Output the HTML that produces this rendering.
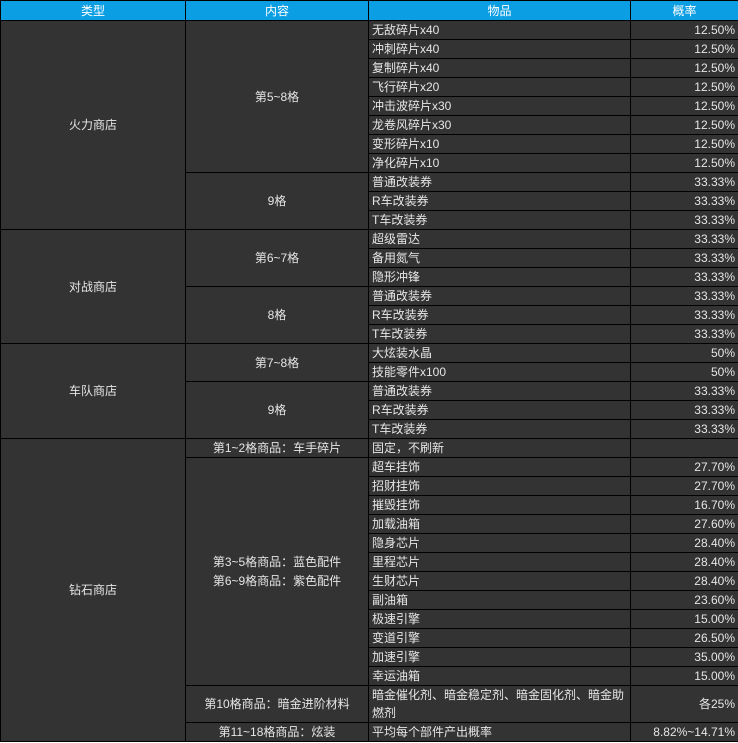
<!DOCTYPE html>
<html><head><meta charset="utf-8"><style>
html,body{margin:0;padding:0;background:#fff;}
table{border-collapse:collapse;table-layout:fixed;width:738px;font-family:"Liberation Sans","Noto Sans CJK SC",sans-serif;font-size:12px;color:#e6e6e6;background:#333;}
td,th{border:1px solid #000;padding:0 3px;height:18px;line-height:18px;overflow:hidden;white-space:nowrap;}
th{background:#0c9ee3;color:#fff;font-weight:normal;height:19px;}
.c{text-align:center}.r{text-align:right}
.w{white-space:normal;line-height:18px}
</style></head><body>
<table>
<colgroup><col style="width:185px"><col style="width:183px"><col style="width:262px"><col style="width:108px"></colgroup>
<tr><th>类型</th><th>内容</th><th>物品</th><th>概率</th></tr>
<tr><td class="c" rowspan="11">火力商店</td><td class="c" rowspan="8">第5~8格</td><td>无敌碎片x40</td><td class="r">12.50%</td></tr>
<tr><td>冲刺碎片x40</td><td class="r">12.50%</td></tr>
<tr><td>复制碎片x40</td><td class="r">12.50%</td></tr>
<tr><td>飞行碎片x20</td><td class="r">12.50%</td></tr>
<tr><td>冲击波碎片x30</td><td class="r">12.50%</td></tr>
<tr><td>龙卷风碎片x30</td><td class="r">12.50%</td></tr>
<tr><td>变形碎片x10</td><td class="r">12.50%</td></tr>
<tr><td>净化碎片x10</td><td class="r">12.50%</td></tr>
<tr><td class="c" rowspan="3">9格</td><td>普通改装券</td><td class="r">33.33%</td></tr>
<tr><td>R车改装券</td><td class="r">33.33%</td></tr>
<tr><td>T车改装券</td><td class="r">33.33%</td></tr>
<tr><td class="c" rowspan="6">对战商店</td><td class="c" rowspan="3">第6~7格</td><td>超级雷达</td><td class="r">33.33%</td></tr>
<tr><td>备用氮气</td><td class="r">33.33%</td></tr>
<tr><td>隐形冲锋</td><td class="r">33.33%</td></tr>
<tr><td class="c" rowspan="3">8格</td><td>普通改装券</td><td class="r">33.33%</td></tr>
<tr><td>R车改装券</td><td class="r">33.33%</td></tr>
<tr><td>T车改装券</td><td class="r">33.33%</td></tr>
<tr><td class="c" rowspan="5">车队商店</td><td class="c" rowspan="2">第7~8格</td><td>大炫装水晶</td><td class="r">50%</td></tr>
<tr><td>技能零件x100</td><td class="r">50%</td></tr>
<tr><td class="c" rowspan="3">9格</td><td>普通改装券</td><td class="r">33.33%</td></tr>
<tr><td>R车改装券</td><td class="r">33.33%</td></tr>
<tr><td>T车改装券</td><td class="r">33.33%</td></tr>
<tr><td class="c" rowspan="15">钻石商店</td><td class="c">第1~2格商品：车手碎片</td><td>固定，不刷新</td><td></td></tr>
<tr><td class="c" rowspan="12" style="line-height:19px">第3~5格商品：蓝色配件<br>第6~9格商品：紫色配件</td><td>超车挂饰</td><td class="r">27.70%</td></tr>
<tr><td>招财挂饰</td><td class="r">27.70%</td></tr>
<tr><td>摧毁挂饰</td><td class="r">16.70%</td></tr>
<tr><td>加载油箱</td><td class="r">27.60%</td></tr>
<tr><td>隐身芯片</td><td class="r">28.40%</td></tr>
<tr><td>里程芯片</td><td class="r">28.40%</td></tr>
<tr><td>生财芯片</td><td class="r">28.40%</td></tr>
<tr><td>副油箱</td><td class="r">23.60%</td></tr>
<tr><td>极速引擎</td><td class="r">15.00%</td></tr>
<tr><td>变道引擎</td><td class="r">26.50%</td></tr>
<tr><td>加速引擎</td><td class="r">35.00%</td></tr>
<tr><td>幸运油箱</td><td class="r">15.00%</td></tr>
<tr><td class="c" style="height:36px">第10格商品：暗金进阶材料</td><td class="w">暗金催化剂、暗金稳定剂、暗金固化剂、暗金助燃剂</td><td class="r">各25%</td></tr>
<tr><td class="c">第11~18格商品：炫装</td><td>平均每个部件产出概率</td><td class="r">8.82%~14.71%</td></tr>
</table>
</body></html>
